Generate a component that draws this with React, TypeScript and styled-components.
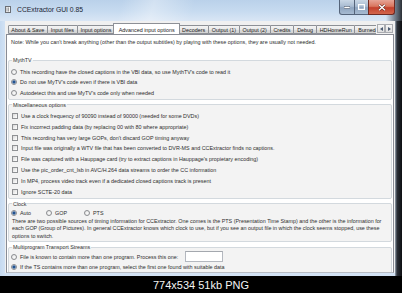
import styled, { createGlobalStyle } from 'styled-components';

const GlobalStyle = createGlobalStyle`
  html, body {
    margin: 0;
    padding: 0;
    background: #000;
  }
  body {
    font-family: "Liberation Sans", Arial, sans-serif;
    color: #2e2e2e;
  }
  * {
    box-sizing: border-box;
  }
`;

const Page = styled.div`
  width: 402px;
  height: 293px;
  display: flex;
  flex-direction: column;
  overflow: hidden;
  background: #000;
`;

const Window = styled.div`
  height: 276px;
  display: flex;
  flex-direction: column;
  background: #c9dcf1;
`;

const TitleBar = styled.div`
  height: 21px;
  display: flex;
  align-items: flex-start;
  background:
    linear-gradient(105deg, rgba(255, 255, 255, 0) 30%, rgba(255, 255, 255, 0.35) 38%, rgba(255, 255, 255, 0) 48%),
    linear-gradient(90deg, rgba(0, 0, 0, 0) 96%, #56606c 99%, #2a2e34 100%),
    linear-gradient(180deg, #bad1ea 0%, #c7dbf0 55%, #d9e6f5 100%);
`;

const AppIcon = styled.svg`
  margin: 6px 0 0 5px;
  flex: none;
`;

const Title = styled.div`
  margin: 6px 0 0 6px;
  font-size: 6.8px;
  line-height: 8px;
  color: #1b2533;
  white-space: nowrap;
`;

const Controls = styled.div`
  margin-left: auto;
  margin-right: 7px;
  display: flex;
`;

const CaptionButton = styled.div<{ $w: number; $close?: boolean }>`
  width: ${(p) => p.$w}px;
  height: 15px;
  display: flex;
  align-items: center;
  justify-content: center;
  border: 1px solid ${(p) => (p.$close ? '#6f2a22' : '#55647a')};
  border-top: none;
  margin-left: -1px;
  border-radius: ${(p) => (p.$close ? '0 0 3px 0' : '0')};
  background: ${(p) =>
    p.$close
      ? 'linear-gradient(180deg, #e6a496 0%, #d9765f 45%, #c3402c 55%, #d2664c 100%)'
      : 'linear-gradient(180deg, #c9d7e6 0%, #a9bcd2 45%, #8ea4bf 55%, #a7bbd1 100%)'};
  &:first-child {
    border-radius: 0 0 0 3px;
  }
`;

const Main = styled.div`
  flex: 1;
  display: flex;
  min-height: 0;
  padding-bottom: 3px;
  background: linear-gradient(90deg, #c6daf0 0, #d2e2f4 5px, #d2e2f4 395px, #99a6b4 395px, #2c3139 397px, #0d0e11 100%);
`;

const Client = styled.div`
  margin-left: 5px;
  width: 390px;
  display: flex;
  flex-direction: column;
  background: #f0f0f0;
`;

const TabStrip = styled.div`
  height: 13px;
  display: flex;
  align-items: flex-end;
  padding: 0 2px 0 3px;
`;

const TabList = styled.div`
  flex: 1;
  display: flex;
  align-items: flex-end;
  overflow: hidden;
  height: 13px;
`;

const Tab = styled.div<{ $active?: boolean }>`
  flex: none;
  height: ${(p) => (p.$active ? 12 : 9)}px;
  padding: 0 ${(p) => (p.$active ? 4.5 : 2.8)}px;
  margin: 0 ${(p) => (p.$active ? -1.5 : -0.5)}px ${(p) => (p.$active ? -1 : 0)}px;
  position: relative;
  z-index: ${(p) => (p.$active ? 2 : 1)};
  display: flex;
  align-items: center;
  font-size: 5.4px;
  white-space: nowrap;
  color: #222;
  border: 1px solid #8d9096;
  border-bottom: ${(p) => (p.$active ? 'none' : '1px solid #8d9096')};
  border-radius: 1px 1px 0 0;
  background: ${(p) =>
    p.$active ? '#fff' : 'linear-gradient(180deg, #f4f4f4 0%, #e9e9e9 50%, #dadada 51%, #d4d4d4 100%)'};
`;

const Scrollers = styled.div`
  display: flex;
  height: 9px;
  margin-bottom: 1px;
  margin-left: 1px;
`;

const Scroller = styled.div`
  width: 8px;
  height: 9px;
  display: flex;
  align-items: center;
  justify-content: center;
  border: 1px solid #a9abb0;
  background: linear-gradient(180deg, #f6f6f6, #dedede);
`;

const TabPage = styled.div`
  flex: 1;
  min-height: 0;
  overflow: hidden;
  margin: 0 1px;
  padding: 3.5px 1px 0 1px;
  border: 1px solid #898c95;
  border-bottom-color: #b8bcc3;
  background: #fff;
  display: flex;
  flex-direction: column;
  gap: 2px;
`;

const Note = styled.div`
  font-size: 5.4px;
  line-height: 7px;
  padding-left: 3px;
  white-space: nowrap;
  margin-bottom: 9.5px;
`;

const Group = styled.fieldset<{ $pt?: number }>`
  flex: none;
  margin: 0;
  padding: ${(p) => p.$pt ?? 3.5}px 1px 0.5px 1px;
  border: 1px solid #d3d9de;
  border-radius: 2px;
  background: #f3f3f3;
  min-width: 0;
`;

const Legend = styled.legend`
  margin-left: 2px;
  padding: 0 1px;
  font-size: 5.4px;
  line-height: 6px;
  color: #333;
`;

const Option = styled.label<{ $w?: number; $h?: number }>`
  display: flex;
  align-items: center;
  gap: 3px;
  height: ${(p) => p.$h ?? 10.6}px;
  padding-left: 1px;
  font-size: 5.4px;
  white-space: nowrap;
  width: ${(p) => (p.$w ? `${p.$w}px` : 'auto')};
  flex: none;
`;

const Radio = styled.span<{ $on?: boolean }>`
  flex: none;
  width: 6px;
  height: 6px;
  border-radius: 50%;
  border: 1px solid #8b8d90;
  background: ${(p) =>
    p.$on
      ? 'radial-gradient(circle, #17427a 0, #2c5e9c 1.2px, #a9c0dc 1.9px, #f6f6f6 2.2px)'
      : 'radial-gradient(circle at 60% 60%, #fbfbfb 0, #e3e3e3 100%)'};
`;

const Check = styled.span`
  flex: none;
  width: 6px;
  height: 6px;
  margin-left: 1px;
  border: 1px solid #8f9194;
  background: linear-gradient(135deg, #d8d8d8 0%, #f2f2f2 60%, #fdfdfd 100%);
`;

const InlineRow = styled.div`
  display: flex;
  align-items: center;
`;

const Paragraph = styled.div`
  font-size: 5.4px;
  line-height: 7.4px;
  padding: 0 0 0.5px 2px;
  white-space: nowrap;
`;

const NumberBox = styled.span`
  width: 38px;
  height: 11px;
  margin-left: 4px;
  border: 1px solid #b4b8bf;
  border-top-color: #a4a8ae;
  background: #fff;
`;

const Caption = styled.div`
  flex: 1;
  display: flex;
  align-items: center;
  justify-content: center;
  padding-top: 1px;
  color: #f4f4f4;
  font-size: 11px;
  background: #000;
`;

const tabs = [
  'About & Save',
  'Input files',
  'Input options',
  'Advanced input options',
  'Decoders',
  'Output (1)',
  'Output (2)',
  'Credits',
  'Debug',
  'HDHomeRun',
  'Burned-in subtitles',
];

const mythOptions = [
  "This recording have the closed captions in the VBI data, so use MythTV's code to read it",
  "Do not use MyTV's code even if there is VBI data",
  "Autodetect this and use MyTV's code only when needed",
];

const miscOptions = [
  'Use a clock frequency of 90090 instead of 90000 (needed for some DVDs)',
  'Fix incorrect padding data (by replacing 00 with 80 where appropriate)',
  "This recording has very large GOPs, don't discard GOP timing anyway",
  'Input file was originally a WTV file that has been converted to DVR-MS and CCExtractor finds no captions.',
  "File was captured with a Hauppage card (try to extract captions in Hauppage's propietary encoding)",
  'Use the pic_order_cnt_lsb in AVC/H.264 data streams to order the CC information',
  'In MP4, process video track even if a dedicated closed captions track is present',
  'Ignore SCTE-20 data',
];

function App() {
  return (
    <Page>
      <GlobalStyle />
      <Window>
        <TitleBar>
          <AppIcon width="6" height="7" viewBox="0 0 6 7">
            <rect x="0.5" y="0.5" width="5" height="6" fill="#f4f4f4" stroke="#6c6f75" strokeWidth="1" />
            <path d="M2 1.5v4M3.5 1.5v4" stroke="#8a8d92" strokeWidth="0.8" />
          </AppIcon>
          <Title>CCExtractor GUI 0.85</Title>
          <Controls>
            <CaptionButton $w={16}>
              <svg width="6" height="3" viewBox="0 0 6 3">
                <rect x="0" y="0.5" width="6" height="2" fill="#fff" stroke="#3a4658" strokeWidth="0.5" />
              </svg>
            </CaptionButton>
            <CaptionButton $w={15}>
              <svg width="7" height="6" viewBox="0 0 7 6">
                <rect x="0.6" y="0.6" width="5.8" height="4.8" fill="none" stroke="#fff" strokeWidth="1.2" />
              </svg>
            </CaptionButton>
            <CaptionButton $w={27} $close>
              <svg width="8" height="7" viewBox="0 0 8 7">
                <path d="M1 0.8L7 6.2M7 0.8L1 6.2" stroke="#5a1a12" strokeWidth="2.4" />
                <path d="M1 0.8L7 6.2M7 0.8L1 6.2" stroke="#fff" strokeWidth="1.5" />
              </svg>
            </CaptionButton>
          </Controls>
        </TitleBar>
        <Main>
          <Client>
            <TabStrip>
              <TabList>
                {tabs.map((t) => (
                  <Tab key={t} $active={t === 'Advanced input options'}>
                    {t}
                  </Tab>
                ))}
              </TabList>
              <Scrollers>
                <Scroller>
                  <svg width="3" height="4" viewBox="0 0 3 4">
                    <path d="M3 0L0 2L3 4Z" fill="#4d5c72" />
                  </svg>
                </Scroller>
                <Scroller>
                  <svg width="3" height="4" viewBox="0 0 3 4">
                    <path d="M0 0L3 2L0 4Z" fill="#4d5c72" />
                  </svg>
                </Scroller>
              </Scrollers>
            </TabStrip>
            <TabPage>
              <Note>
                Note: While you can't break anything (other than the output subtitles) by playing with these options,
                they are usually not needed.
              </Note>
              <Group>
                <Legend>MythTV</Legend>
                {mythOptions.map((o, i) => (
                  <Option key={o}>
                    <Radio $on={i === 1} />
                    {o}
                  </Option>
                ))}
              </Group>
              <Group $pt={2.5}>
                <Legend>Miscellaneous options</Legend>
                {miscOptions.map((o) => (
                  <Option key={o} $h={10.9}>
                    <Check />
                    {o}
                  </Option>
                ))}
              </Group>
              <Group $pt={2}>
                <Legend>Clock</Legend>
                <InlineRow>
                  <Option $w={35} $h={9}>
                    <Radio $on />
                    Auto
                  </Option>
                  <Option $w={38} $h={9}>
                    <Radio />
                    GOP
                  </Option>
                  <Option $h={9}>
                    <Radio />
                    PTS
                  </Option>
                </InlineRow>
                <Paragraph>
                  There are two possible sources of timing information for CCExtractor. One comes is the PTS
                  (Presentation Time Stamp) and the other is the information for
                  <br />
                  each GOP (Group of Pictures). In general CCExtractor knows which clock to use, but if you see an
                  output file in which the clock seems stopped, use these
                  <br />
                  options to switch.
                </Paragraph>
              </Group>
              <Group $pt={1.5}>
                <Legend>Multiprogram Transport Streams</Legend>
                <Option $h={10.2}>
                  <Radio />
                  File is known to contain more than one program. Process this one:
                  <NumberBox />
                </Option>
                <Option $h={10.2}>
                  <Radio $on />
                  If the TS contains more than one program, select the first one found with suitable data
                </Option>
              </Group>
            </TabPage>
          </Client>
        </Main>
      </Window>
      <Caption>774x534 51kb PNG</Caption>
    </Page>
  );
}

export default App;
